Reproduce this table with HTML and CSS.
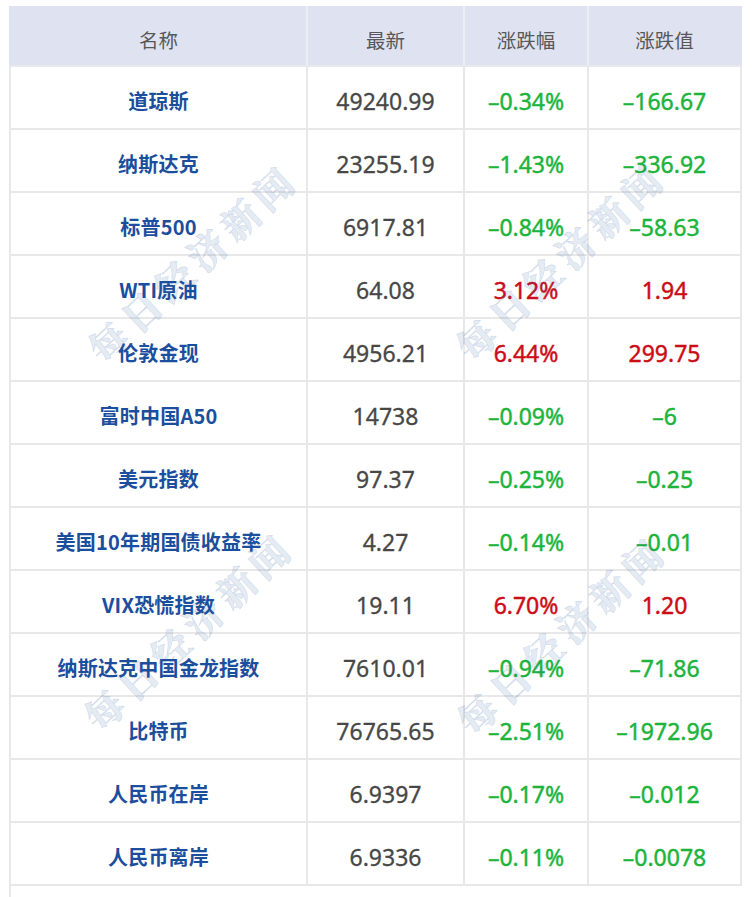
FILE: index.html
```html
<!DOCTYPE html>
<html lang="zh-CN">
<head>
<meta charset="utf-8">
<title>行情</title>
<link rel="stylesheet" href="styles.css">
</head>
<body>
<div class="wrap">
  <div class="table">
    <div class="row head">
      <div class="cell">名称</div>
      <div class="cell">最新</div>
      <div class="cell">涨跌幅</div>
      <div class="cell">涨跌值</div>
    </div>
    <div class="row"><div class="cell name">道琼斯</div><div class="cell num">49240.99</div><div class="cell num down">–0.34%</div><div class="cell num down">–166.67</div></div>
    <div class="row"><div class="cell name">纳斯达克</div><div class="cell num">23255.19</div><div class="cell num down">–1.43%</div><div class="cell num down">–336.92</div></div>
    <div class="row"><div class="cell name">标普500</div><div class="cell num">6917.81</div><div class="cell num down">–0.84%</div><div class="cell num down">–58.63</div></div>
    <div class="row"><div class="cell name">WTI原油</div><div class="cell num">64.08</div><div class="cell num up">3.12%</div><div class="cell num up">1.94</div></div>
    <div class="row"><div class="cell name">伦敦金现</div><div class="cell num">4956.21</div><div class="cell num up">6.44%</div><div class="cell num up">299.75</div></div>
    <div class="row"><div class="cell name">富时中国A50</div><div class="cell num">14738</div><div class="cell num down">–0.09%</div><div class="cell num down">–6</div></div>
    <div class="row"><div class="cell name">美元指数</div><div class="cell num">97.37</div><div class="cell num down">–0.25%</div><div class="cell num down">–0.25</div></div>
    <div class="row"><div class="cell name">美国10年期国债收益率</div><div class="cell num">4.27</div><div class="cell num down">–0.14%</div><div class="cell num down">–0.01</div></div>
    <div class="row"><div class="cell name">VIX恐慌指数</div><div class="cell num">19.11</div><div class="cell num up">6.70%</div><div class="cell num up">1.20</div></div>
    <div class="row"><div class="cell name">纳斯达克中国金龙指数</div><div class="cell num">7610.01</div><div class="cell num down">–0.94%</div><div class="cell num down">–71.86</div></div>
    <div class="row"><div class="cell name">比特币</div><div class="cell num">76765.65</div><div class="cell num down">–2.51%</div><div class="cell num down">–1972.96</div></div>
    <div class="row"><div class="cell name">人民币在岸</div><div class="cell num">6.9397</div><div class="cell num down">–0.17%</div><div class="cell num down">–0.012</div></div>
    <div class="row"><div class="cell name">人民币离岸</div><div class="cell num">6.9336</div><div class="cell num down">–0.11%</div><div class="cell num down">–0.0078</div></div>
    <div class="tail"></div>
  </div>
  <span class="mark" style="left:192px;top:262px">每日经济新闻</span>
  <span class="mark" style="left:560px;top:260px">每日经济新闻</span>
  <span class="mark" style="left:188px;top:630px">每日经济新闻</span>
  <span class="mark" style="left:561px;top:634px">每日经济新闻</span>
</div>
</body>
</html>
```
FILE: styles.css
```css
html, body {
  margin: 0;
  padding: 0;
  background: #ffffff;
}

.wrap {
  position: relative;
  padding: 6px 0 0 9px;
  width: 733px;
  font-family: "Noto Sans CJK SC", "Noto Sans", sans-serif;
}

.table {
  width: 733px;
}

.row {
  display: grid;
  grid-template-columns: 295px 155px 122px 151px;
  column-gap: 2px;
  background: #e8e8e8;
  border-left: 2px solid #e8e8e8;
  border-right: 2px solid #e8e8e8;
  border-bottom: 2px solid #e8e8e8;
}

.cell {
  background: #ffffff;
  height: 61px;
  box-sizing: border-box;
  padding-top: 6px;
  display: flex;
  align-items: center;
  justify-content: center;
  white-space: nowrap;
}

.row.head {
  background: #eceef6;
  border-left-color: #dfe2f0;
  border-right-color: #dfe2f0;
  border-bottom-color: #e9e9ec;
}

.row.head .cell {
  background: #dfe2f0;
  height: 59px;
  font-size: 19.5px;
  color: #585858;
  font-weight: 400;
  padding-top: 7px;
}

.name {
  font-size: 20px;
  font-weight: 700;
  letter-spacing: 0.2px;
  color: #1b4e9d;
}

.num {
  font-family: "Noto Sans", "Noto Sans CJK SC", sans-serif;
  font-size: 23px;
  font-weight: 400;
  color: #474747;
  -webkit-text-stroke: 0.3px currentColor;
}

.num.down {
  color: #1cb43b;
  -webkit-text-stroke: 0.45px currentColor;
}

.num.up {
  color: #cc0d16;
  -webkit-text-stroke: 0.45px currentColor;
}

.tail {
  height: 14px;
  border-left: 2px solid #e8e8e8;
}

.mark {
  position: absolute;
  transform: translate(-50%, -50%) rotate(-43deg);
  font-family: "Noto Serif CJK SC", "Noto Sans CJK SC", serif;
  font-weight: 900;
  font-size: 38px;
  letter-spacing: 7px;
  color: rgba(50, 95, 165, 0.14);
  -webkit-text-stroke: 0.8px rgba(50, 95, 165, 0.14);
  white-space: nowrap;
  pointer-events: none;
}
```
